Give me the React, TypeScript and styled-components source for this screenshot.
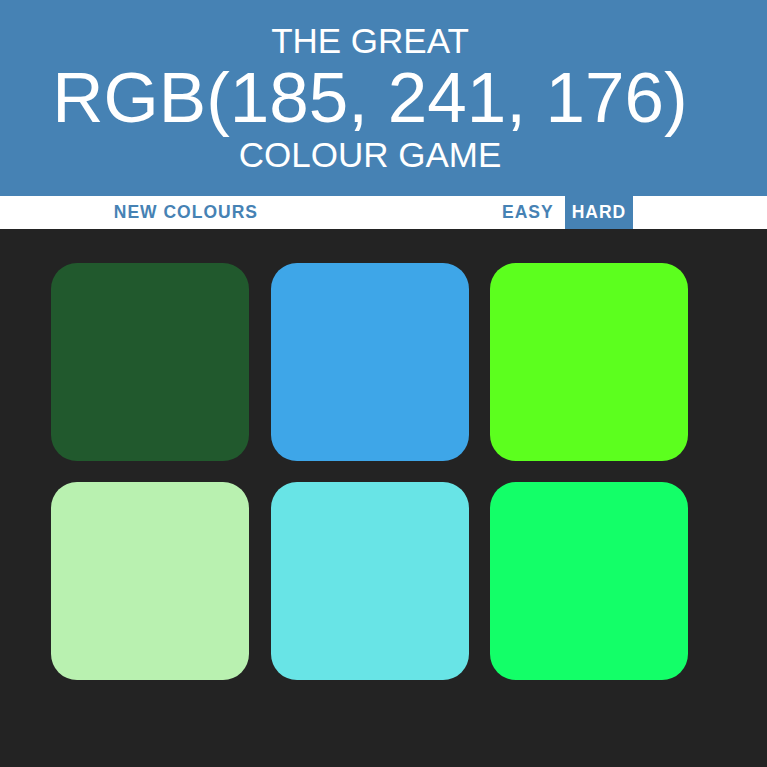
import React from "react";
import styled, { createGlobalStyle } from "styled-components";

const GlobalStyle = createGlobalStyle`
  html, body {
    margin: 0;
    padding: 0;
    background: #232323;
    font-family: "Liberation Sans", Arial, sans-serif;
  }
`;

const Header = styled.header`
  background: #4682b4;
  color: #ffffff;
  padding: 22px 0;
`;

const HeaderInner = styled.div`
  width: 740px;
  text-align: center;
  text-transform: uppercase;
`;

const TitleLine = styled.div<{ $size: number; $lh: number }>`
  font-size: ${(p) => p.$size}px;
  line-height: ${(p) => p.$lh}px;
  font-weight: normal;
  white-space: nowrap;
`;

const Stripe = styled.nav`
  background: #ffffff;
  height: 33px;
`;

const StripeInner = styled.div`
  width: 740px;
  height: 100%;
  display: flex;
  justify-content: center;
  align-items: stretch;
  gap: 4px;
`;

const StripeButton = styled.button<{ $selected?: boolean }>`
  border: none;
  margin: 0;
  padding: 0 7px;
  height: 100%;
  background: ${(p) => (p.$selected ? "#4682b4" : "transparent")};
  color: ${(p) => (p.$selected ? "#ffffff" : "#4682b4")};
  font-family: "Liberation Sans", Arial, sans-serif;
  font-weight: 700;
  font-size: 17.5px;
  letter-spacing: 1px;
  text-transform: uppercase;
  cursor: pointer;
`;

const Message = styled.span`
  width: 222px;
`;

const Board = styled.main`
  width: 740px;
  box-sizing: border-box;
  padding: 34px 0 0 51px;
  display: grid;
  grid-template-columns: repeat(3, 198px);
  column-gap: 21.5px;
  row-gap: 21px;
`;

const Square = styled.div<{ $color: string }>`
  width: 198px;
  height: 198px;
  border-radius: 26px;
  background: ${(p) => p.$color};
`;

const colours = [
  "rgb(33, 89, 45)",
  "rgb(62, 166, 232)",
  "rgb(92, 255, 30)",
  "rgb(185, 241, 176)",
  "rgb(104, 228, 230)",
  "rgb(19, 255, 104)",
];

export default function App() {
  return (
    <>
      <GlobalStyle />
      <Header>
        <HeaderInner>
          <TitleLine $size={35} $lh={38}>The Great</TitleLine>
          <TitleLine $size={71} $lh={76}>RGB(185, 241, 176)</TitleLine>
          <TitleLine $size={35} $lh={38}>Colour Game</TitleLine>
        </HeaderInner>
      </Header>
      <Stripe>
        <StripeInner>
          <StripeButton>New Colours</StripeButton>
          <Message />
          <StripeButton>Easy</StripeButton>
          <StripeButton $selected>Hard</StripeButton>
        </StripeInner>
      </Stripe>
      <Board>
        {colours.map((c, i) => (
          <Square key={i} $color={c} />
        ))}
      </Board>
    </>
  );
}
